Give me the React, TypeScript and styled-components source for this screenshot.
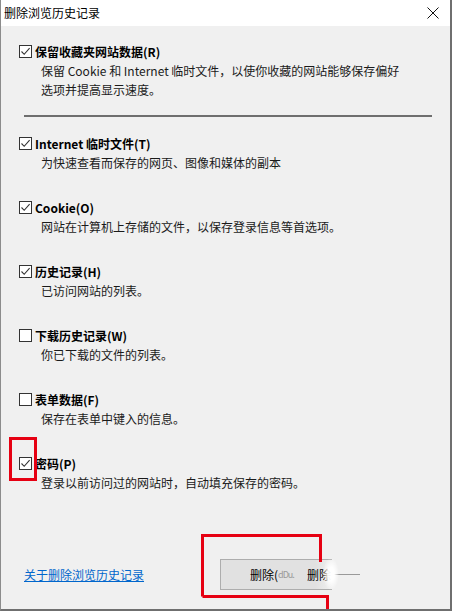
import styled, { createGlobalStyle } from 'styled-components'

const Global = createGlobalStyle`
    html, body { margin: 0; padding: 0; background: #f0f0f0; }
    body { font-family: "Noto Sans CJK SC", "Noto Sans", sans-serif; color: #000; }
`

const Window = styled.div`
    position: relative;
    box-sizing: border-box;
    width: 452px;
    height: 611px;
    display: flex;
    flex-direction: column;
    background: #f0f0f0;
    border-left: 1px solid #8c8c8c;
    border-right: 2px solid #6f6f6f;
    border-bottom: 2px solid #6f6f6f;
    overflow: hidden;
`

const TitleBar = styled.div`
    height: 26px;
    flex-shrink: 0;
    display: flex;
    align-items: center;
    justify-content: space-between;
    background: #fff;
    padding: 0 6px 0 3px;
    font-size: 12px;
    line-height: 1;

    .close {
        width: 14px;
        height: 14px;
        margin-right: 4px;
        display: inline-flex;
    }
`

const Body = styled.div`
    display: flex;
    flex-direction: column;
    padding: 15px 18px 0 18px;
    flex: 1;
`

const Option = styled.div<{ $gap?: number }>`
    display: flex;
    flex-direction: column;
    margin-bottom: ${p => p.$gap ?? 25}px;
`

const LabelRow = styled.div`
    height: 20px;
    display: flex;
    align-items: center;
    gap: 3px;
    font-size: 12px;
    font-weight: 700;
`

const Box = styled.span`
    box-sizing: border-box;
    width: 13px;
    height: 13px;
    border: 1px solid #333;
    background: #fff;
    display: inline-flex;
    align-items: center;
    justify-content: center;
    flex-shrink: 0;
`

const Desc = styled.div`
    margin-left: 22px;
    font-size: 12px;
    line-height: 19px;
    color: #1a1a1a;
`

const Divider = styled.div`
    height: 2px;
    background: #6e6e6e;
    margin: 0 0 16px 5px;
`

const Footer = styled.div`
    display: flex;
    align-items: center;
    padding: 0 0 19px 23px;
    margin-top: auto;
`

const Link = styled.a`
    font-size: 12px;
    color: #0066cc;
    text-decoration: underline;
    width: 196px;
    cursor: pointer;
`

const Button = styled.div`
    box-sizing: border-box;
    height: 31px;
    width: 112px;
    display: flex;
    align-items: center;
    white-space: nowrap;
    overflow: hidden;
    font-size: 12px;
    padding-left: 29px;
    border: 1px solid #adadad;
    border-right: none;
    background: linear-gradient(to right, #e1e1e1 85%, #f0f0f0 100%);

    span { flex-shrink: 0; }

    .ghost {
        color: #999;
        font-size: 9px;
        letter-spacing: -1px;
        width: 29px;
    }
`

const Tail = styled.div`
    width: 26px;
    height: 1px;
    background: #9a9a9a;
    margin-left: 2px;
`

const Smudge = styled.div`
    position: absolute;
    left: 322px;
    top: 558px;
    width: 16px;
    height: 32px;
    border-radius: 50%;
    background: radial-gradient(ellipse at center, rgba(255,255,255,0.95) 30%, rgba(255,255,255,0) 72%);
`

const RedBox = styled.div`
    position: absolute;
    left: 8px;
    top: 437px;
    width: 28px;
    height: 44px;
    box-sizing: border-box;
    border: 3px solid #e60012;
`

const Marks = styled.svg`
    position: absolute;
    left: 0;
    top: 0;
    pointer-events: none;
`

function Check({ on }: { on: boolean }) {
    return (
        <Box>
            {on && (
                <svg width="11" height="11" viewBox="0 0 11 11">
                    <path d="M1.5 5.5 L4.2 8.3 L9.6 2.2" fill="none" stroke="#333" strokeWidth="1.1" />
                </svg>
            )}
        </Box>
    )
}

const options = [
    { label: 'Internet 临时文件(T)', desc: '为快速查看而保存的网页、图像和媒体的副本', on: true },
    { label: 'Cookie(O)', desc: '网站在计算机上存储的文件，以保存登录信息等首选项。', on: true },
    { label: '历史记录(H)', desc: '已访问网站的列表。', on: true },
    { label: '下载历史记录(W)', desc: '你已下载的文件的列表。', on: false },
    { label: '表单数据(F)', desc: '保存在表单中键入的信息。', on: false },
    { label: '密码(P)', desc: '登录以前访问过的网站时，自动填充保存的密码。', on: true },
]

export default function App() {
    return (
        <>
            <Global />
            <Window>
                <TitleBar>
                    <span>删除浏览历史记录</span>
                    <svg className="close" viewBox="0 0 14 14">
                        <path d="M1.5 1.5 L12.5 12.5 M12.5 1.5 L1.5 12.5" stroke="#111" strokeWidth="1" />
                    </svg>
                </TitleBar>
                <Body>
                    <Option $gap={16}>
                        <LabelRow><Check on />保留收藏夹网站数据(R)</LabelRow>
                        <Desc>
                            保留 Cookie 和 Internet 临时文件，以使你收藏的网站能够保存偏好<br />
                            选项并提高显示速度。
                        </Desc>
                    </Option>
                    <Divider />
                    {options.map(o => (
                        <Option key={o.label}>
                            <LabelRow><Check on={o.on} />{o.label}</LabelRow>
                            <Desc>{o.desc}</Desc>
                        </Option>
                    ))}
                </Body>
                <Footer>
                    <Link>关于删除浏览历史记录</Link>
                    <Button>
                        <span>删除(</span>
                        <span className="ghost">dDu.</span>
                        <span>删除</span>
                    </Button>
                    <Tail />
                </Footer>
                <Smudge />
                <RedBox />
                <Marks width="452" height="611" viewBox="0 0 452 611">
                    <path d="M201.5 596.5 L201.5 535.5 L319.5 535.5 L319.5 562" fill="none" stroke="#e60012" strokeWidth="3" />
                    <path d="M201.5 596.5 L326.5 596.5 L326.5 612" fill="none" stroke="#e60012" strokeWidth="3" />
                </Marks>
            </Window>
        </>
    )
}
